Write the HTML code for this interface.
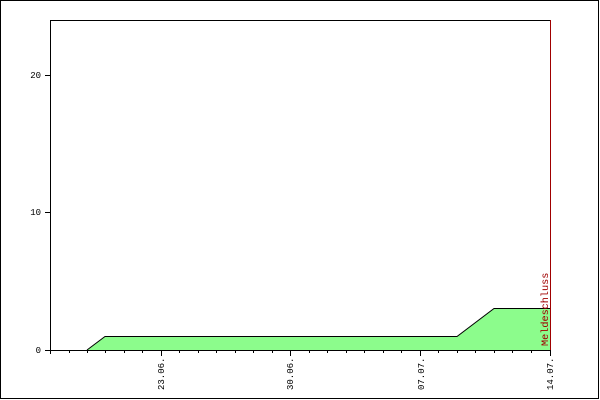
<!DOCTYPE html>
<html><head><style>html,body{margin:0;padding:0;background:#fff}svg{display:block}</style></head><body>
<svg width="600" height="400" xmlns="http://www.w3.org/2000/svg" shape-rendering="crispEdges">
<rect x="0.5" y="0.5" width="598" height="398" fill="none" stroke="#000"/>
<polygon points="87,350 105,336.5 457,336.5 494,308.5 550,308.5 550,350" fill="#8cfc8c" stroke="none"/>
<polyline points="87,350 105,336.5 457,336.5 494,308.5 550,308.5" fill="none" stroke="#000" stroke-width="1" shape-rendering="auto"/>
<line x1="50.5" y1="20" x2="50.5" y2="351" stroke="#000"/>
<line x1="50" y1="20.5" x2="550" y2="20.5" stroke="#000"/>
<line x1="50" y1="350.5" x2="551" y2="350.5" stroke="#000"/>
<line x1="550.5" y1="20" x2="550.5" y2="351" stroke="#a00000"/>
<g stroke="#000">
<line x1="45" y1="75.5" x2="50" y2="75.5"/>
<line x1="45" y1="212.5" x2="50" y2="212.5"/>
<line x1="45" y1="350.5" x2="50" y2="350.5"/>
</g>
<g stroke="#000">
<line x1="50.5" y1="350" x2="50.5" y2="354"/>
<line x1="69.5" y1="350" x2="69.5" y2="353"/>
<line x1="87.5" y1="350" x2="87.5" y2="353"/>
<line x1="105.5" y1="350" x2="105.5" y2="353"/>
<line x1="124.5" y1="350" x2="124.5" y2="353"/>
<line x1="142.5" y1="350" x2="142.5" y2="353"/>
<line x1="161.5" y1="350" x2="161.5" y2="356"/>
<line x1="179.5" y1="350" x2="179.5" y2="353"/>
<line x1="198.5" y1="350" x2="198.5" y2="353"/>
<line x1="216.5" y1="350" x2="216.5" y2="353"/>
<line x1="235.5" y1="350" x2="235.5" y2="353"/>
<line x1="253.5" y1="350" x2="253.5" y2="353"/>
<line x1="272.5" y1="350" x2="272.5" y2="353"/>
<line x1="290.5" y1="350" x2="290.5" y2="356"/>
<line x1="309.5" y1="350" x2="309.5" y2="353"/>
<line x1="327.5" y1="350" x2="327.5" y2="353"/>
<line x1="346.5" y1="350" x2="346.5" y2="353"/>
<line x1="364.5" y1="350" x2="364.5" y2="353"/>
<line x1="383.5" y1="350" x2="383.5" y2="353"/>
<line x1="401.5" y1="350" x2="401.5" y2="353"/>
<line x1="420.5" y1="350" x2="420.5" y2="356"/>
<line x1="438.5" y1="350" x2="438.5" y2="353"/>
<line x1="457.5" y1="350" x2="457.5" y2="353"/>
<line x1="475.5" y1="350" x2="475.5" y2="353"/>
<line x1="494.5" y1="350" x2="494.5" y2="353"/>
<line x1="512.5" y1="350" x2="512.5" y2="353"/>
<line x1="531.5" y1="350" x2="531.5" y2="353"/>
<line x1="550.5" y1="350" x2="550.5" y2="356"/>
</g>
<g font-family="Liberation Mono, monospace" font-size="9" fill="#000">
<text x="41" y="78" text-anchor="end">20</text>
<text x="41" y="215" text-anchor="end">10</text>
<text x="41" y="353" text-anchor="end">0</text>
<text transform="translate(164,390) rotate(-90)">23.06.</text>
<text transform="translate(293,390) rotate(-90)">30.06.</text>
<text transform="translate(424,390) rotate(-90)">07.07.</text>
<text transform="translate(553,390) rotate(-90)">14.07.</text>
<text transform="translate(548,346) rotate(-90)" fill="#a00000" font-size="10.2">Meldeschluss</text>
</g>
</svg>
</body></html>
